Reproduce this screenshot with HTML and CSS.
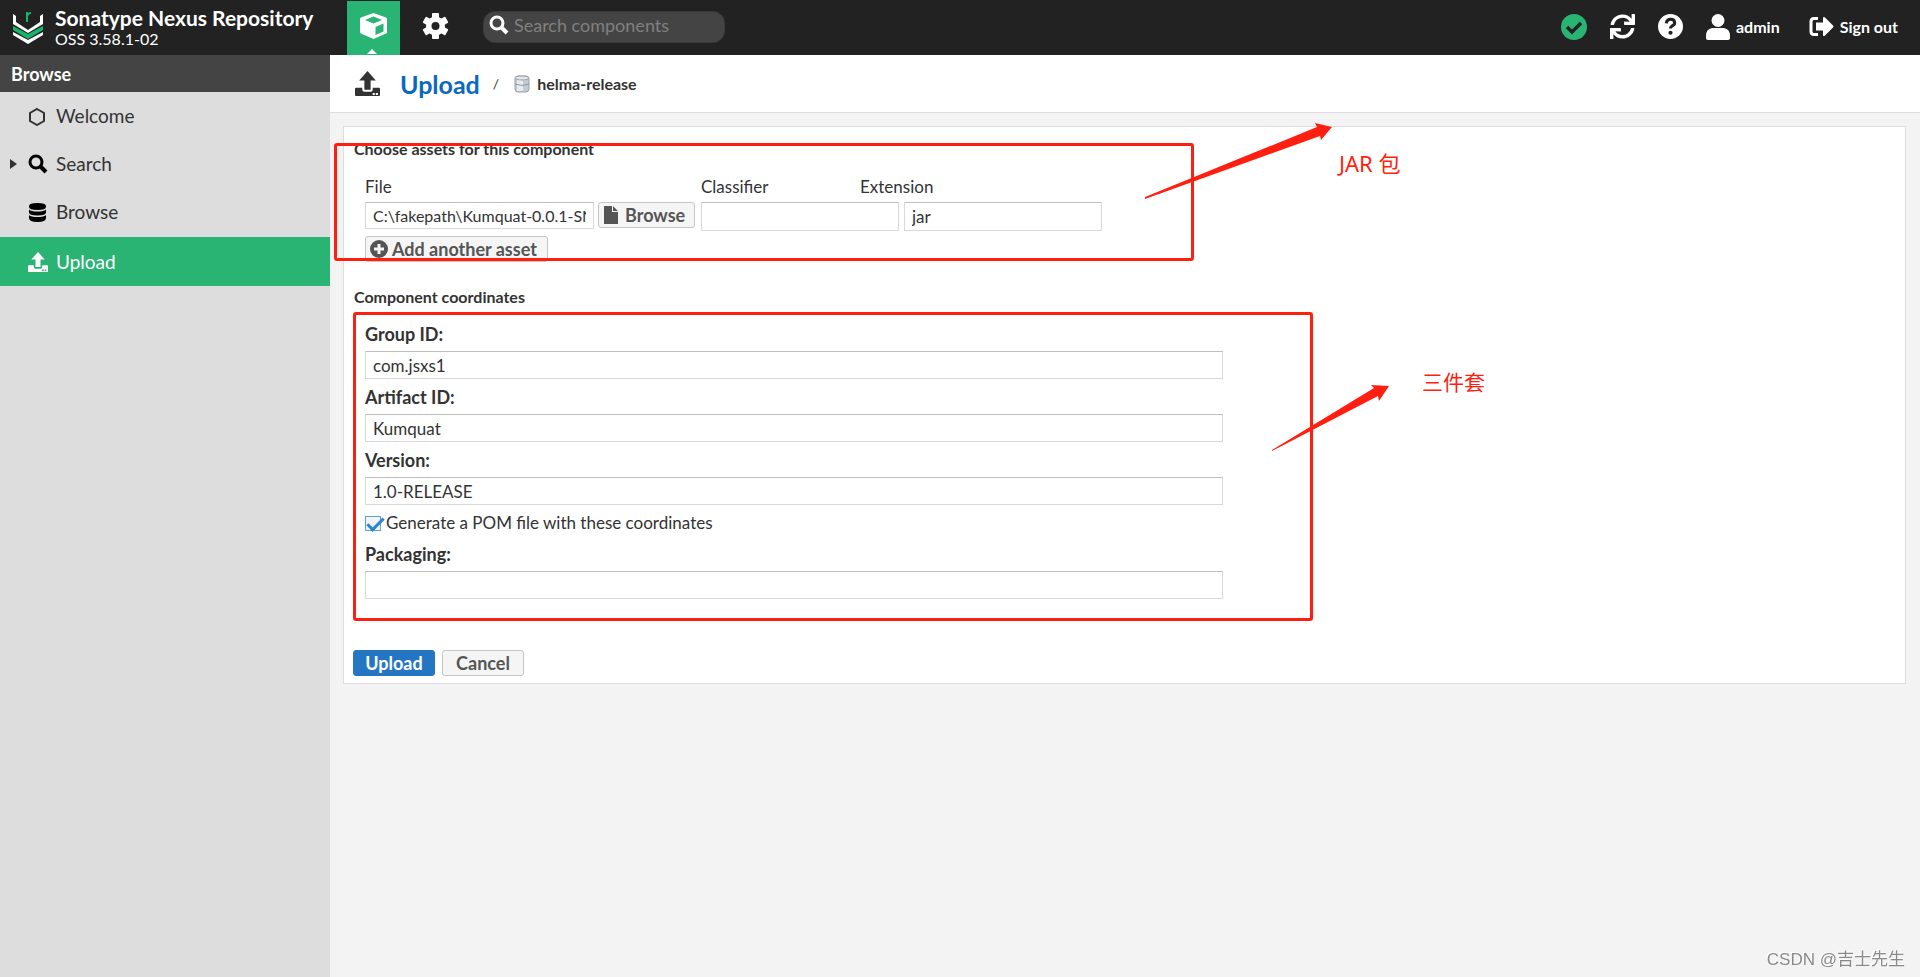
FILE: index.html
```html
<!DOCTYPE html>
<html lang="en">
<head>
<meta charset="utf-8">
<title>Upload - Nexus Repository Manager</title>
<link rel="stylesheet" href="styles.css">
</head>
<body>
<svg class="defs" aria-hidden="true">
  <symbol id="i-upload" viewBox="0 0 24 24"><path fill-rule="evenodd" d="M12 0l8 9h-5v9H9V9H4zM1 16h6v2q0 2 2 2h6q2 0 2-2v-2h6q1 0 1 1v6q0 1-1 1H1q-1 0-1-1v-6q0-1 1-1zM17 21v2h2v-2zM20 21v2h2v-2z"/></symbol>
  <symbol id="i-search" viewBox="0 0 20 20"><circle cx="8" cy="8" r="6" fill="none" stroke="currentColor" stroke-width="3"/><path d="M12 12l6 6" fill="none" stroke="currentColor" stroke-width="4"/></symbol>
</svg>
<div class="app">
  <header class="topbar">
    <div class="brand">
      <svg class="brand-logo" viewBox="0 0 30 32" aria-hidden="true">
        <path d="M0 2l3 2v6l12 8 12-8V4l3-2v10L15 21 0 12z" fill="#fff"/>
        <path d="M0 14l15 8 15-8v4l-15 9-15-9z" fill="#13b569"/>
        <path d="M0 20l15 8 15-8v3l-15 9-15-9z" fill="#fff"/>
        <path d="M14 10V0M14 4q1-3 4-3" fill="none" stroke="#13b569" stroke-width="2"/>
      </svg>
      <div class="brand-text">
        <div class="brand-name">Sonatype Nexus Repository</div>
        <div class="brand-version">OSS 3.58.1-02</div>
      </div>
    </div>
    <nav class="modes">
      <button class="mode mode-active" type="button" aria-label="Browse server contents">
        <svg class="icon-27" viewBox="0 0 27 26" aria-hidden="true"><path fill-rule="evenodd" fill="#fff" d="M13.500 0L26 4.500q1 .5 1 1.500v13q0 1-1 1.500L13.500 26 1 20.500Q0 20 0 19V6q0-1 1-1.500zM13.500 3.500L5 7l8.500 3.500L22 7zM15.500 14v8l8-3.500V10.500z"/></svg>
        <span class="mode-arrow"></span>
      </button>
      <button class="mode" type="button" aria-label="Administration">
        <svg class="icon-27" viewBox="0 0 26 26" aria-hidden="true"><g fill="#fff"><rect x="9.500" y="0" width="7" height="26" rx="1"/><rect x="9.500" y="0" width="7" height="26" rx="1" transform="rotate(60 13 13)"/><rect x="9.500" y="0" width="7" height="26" rx="1" transform="rotate(120 13 13)"/><circle cx="13" cy="13" r="9.500"/></g><circle cx="13" cy="13" r="4" fill="#222"/></svg>
      </button>
    </nav>
    <label class="quick-search">
      <svg class="icon-20" aria-hidden="true"><use href="#i-search"/></svg>
      <input type="search" placeholder="Search components" aria-label="Search components">
    </label>
    <div class="actions">
      <button type="button" aria-label="System status"><svg class="icon-26" viewBox="0 0 26 26" aria-hidden="true"><circle cx="13" cy="13" r="13" fill="#2ab474"/><path d="M6 13l5 5 9-9" fill="none" stroke="#222" stroke-width="3.500"/></svg></button>
      <button type="button" aria-label="Refresh"><svg class="icon-25" viewBox="0 0 512 512" aria-hidden="true"><path fill="#fff" d="M440.650 12.570l4 82.770A247.160 247.160 0 0 0 255.830 8C134.730 8 33.910 94.920 12.290 209.820A12 12 0 0 0 24.090 224h49.050a12 12 0 0 0 11.670-9.260 175.910 175.910 0 0 1 317-56.940l-101.460-4.860a12 12 0 0 0-12.570 12v47.410a12 12 0 0 0 12 12H500a12 12 0 0 0 12-12V12a12 12 0 0 0-12-12h-47.370a12 12 0 0 0-11.980 12.570zM255.830 432a175.610 175.610 0 0 1-146-77.800l101.800 4.870a12 12 0 0 0 12.570-12v-47.400a12 12 0 0 0-12-12H12a12 12 0 0 0-12 12V500a12 12 0 0 0 12 12h47.350a12 12 0 0 0 12-12.600l-4.150-82.570A247.170 247.170 0 0 0 255.830 504c121.110 0 221.930-86.920 243.550-201.820a12 12 0 0 0-11.800-14.180h-49.050a12 12 0 0 0-11.670 9.260A175.860 175.860 0 0 1 255.830 432z"/></svg></button>
      <button type="button" aria-label="Help"><svg class="icon-25" viewBox="0 0 24 24" aria-hidden="true"><circle cx="12" cy="12" r="12" fill="#fff"/><path d="M8 9q.5-4 4-4 4 0 4 3.500 0 2-2.500 3-1.500 1-1.500 2.500" fill="none" stroke="#222" stroke-width="3"/><circle cx="12" cy="18" r="2" fill="#222"/></svg></button>
      <button type="button"><svg class="icon-user" viewBox="0 0 24 26" aria-hidden="true"><circle cx="12" cy="6.500" r="6.500" fill="#fff"/><path d="M6 14h12q6 1 6 8v2q0 2-2 2H2q-2 0-2-2v-2q0-7 6-8z" fill="#fff"/></svg><span>admin</span></button>
      <button class="signout" type="button"><svg class="icon-25" viewBox="0 0 25 20" aria-hidden="true"><path d="M9 2H5Q2 2 2 5v10q0 3 3 3h4" fill="none" stroke="#fff" stroke-width="3"/><path d="M7 6h7V1q1-1 2 0l8 8q1 1 0 2l-8 8q-1 1-2 0v-5H7z" fill="#fff"/></svg><span>Sign out</span></button>
    </div>
  </header>
  <div class="body">
    <aside class="sidebar">
      <h2>Browse</h2>
      <nav class="menu">
        <a href="#welcome"><span class="twisty"></span><svg class="icon-20" viewBox="0 0 20 20" aria-hidden="true"><path d="M9 3l7 4v8l-7 4-7-4V7z" fill="none" stroke="#333" stroke-width="2"/></svg>Welcome</a>
        <a href="#search"><span class="twisty twisty-shown"></span><svg class="icon-20 black" aria-hidden="true"><use href="#i-search"/></svg>Search</a>
        <a href="#browse"><span class="twisty"></span><svg class="icon-20 black" viewBox="0 0 20 20" aria-hidden="true"><path d="M1 4q0-3 8.500-3T18 4v1q0 3-8.500 3T1 5zM1 7.500q2 2 8.500 2t8.500-2v3q0 3-8.500 3t-8.500-3zM1 13q2 2 8.500 2t8.500-2v3q0 4-8.500 4T1 16z"/></svg>Browse</a>
        <a href="#upload" class="current"><span class="twisty"></span><svg class="icon-20" aria-hidden="true"><use href="#i-upload"/></svg>Upload</a>
      </nav>
    </aside>
    <main class="content">
      <div class="crumbs">
        <svg class="icon-25" aria-hidden="true"><use href="#i-upload"/></svg>
        <a href="#upload">Upload</a>
        <span class="slash">/</span>
        <svg class="repo" viewBox="0 0 16 18" aria-hidden="true"><rect x="1" y="1" width="14" height="16" rx="3" fill="#c3cad2" stroke="#9aa3ad"/><rect x="3" y="2" width="6" height="14" fill="#e8ecf0"/><ellipse cx="8" cy="3" rx="7" ry="2" fill="#e3e7eb" stroke="#9aa3ad"/><path d="M1 9q7 3 14 0" fill="none" stroke="#8f99a4"/></svg>
        <span class="repo-name">helma-release</span>
      </div>
      <form class="panel">
        <section>
          <h3>Choose assets for this component</h3>
          <div class="asset-grid">
            <div class="asset-labels">
              <label for="file">File</label>
              <label for="classifier">Classifier</label>
              <label for="extension">Extension</label>
            </div>
            <div class="asset-row">
              <input id="file" class="field field-file" type="text" value="C:\fakepath\Kumquat-0.0.1-SNAPSHOT.jar">
              <button class="btn btn-browse" type="button"><svg class="doc" viewBox="0 0 14 18" aria-hidden="true"><path d="M0 0h8v6h6v12H0zM9 0l5 5H9z"/></svg>Browse</button>
              <input id="classifier" class="field field-short" type="text">
              <input id="extension" class="field field-short" type="text" value="jar">
            </div>
            <button class="btn btn-add" type="button"><svg class="plus" viewBox="0 0 18 18" aria-hidden="true"><circle cx="9" cy="9" r="9"/><path d="M9 4v10M4 9h10" stroke="#f5f5f5" stroke-width="3"/></svg>Add another asset</button>
          </div>
        </section>
        <section>
          <h3>Component coordinates</h3>
          <div class="coords">
            <label for="group">Group ID:</label>
            <input id="group" class="field" type="text" value="com.jsxs1">
            <label for="artifact">Artifact ID:</label>
            <input id="artifact" class="field" type="text" value="Kumquat">
            <label for="version">Version:</label>
            <input id="version" class="field" type="text" value="1.0-RELEASE">
            <label class="check"><input type="checkbox" checked>Generate a POM file with these coordinates</label>
            <label for="packaging">Packaging:</label>
            <input id="packaging" class="field" type="text">
          </div>
        </section>
        <div class="form-actions">
          <button class="btn btn-primary" type="button">Upload</button>
          <button class="btn btn-cancel" type="button">Cancel</button>
        </div>
      </form>
      <div class="mark mark-assets"></div>
      <div class="mark mark-coords"></div>
      <svg class="arrows" viewBox="0 0 1100 400" aria-hidden="true">
        <path d="M815 142L987 72l-2-4 17 4-11 13-1-4L815 144z"/>
        <path d="M942 395L1044 333l-3-3 18 1-10 15-1-5L942 396z"/>
      </svg>
      <span class="note note-jar">JAR 包</span>
      <span class="note note-three">三件套</span>
    </main>
  </div>
  <div class="watermark">CSDN @吉士先生</div>
</div>
</body>
</html>
```
FILE: styles.css
```css
* { box-sizing: border-box; }
body { margin: 0; font: 17px/20px Lato, "Noto Sans CJK SC", sans-serif; color: #333; }
button, input { font: inherit; color: inherit; margin: 0; }
button { border: 0; background: none; padding: 0; cursor: pointer; }
a { color: inherit; text-decoration: none; }
svg { display: block; flex: none; fill: currentColor; }
.defs { position: absolute; width: 0; height: 0; }
.app { display: flex; flex-direction: column; min-height: 100vh; }

.topbar { display: flex; height: 55px; background: #222; color: #fff; }
.brand { display: flex; width: 347px; padding: 6px 0 0 13px; gap: 12px; }
.brand-logo { width: 30px; height: 34px; margin-top: 5px; }
.brand-name { font-size: 21px; font-weight: 700; line-height: 24px; white-space: nowrap; }
.brand-version { font-size: 16px; line-height: 18px; }
.modes { display: flex; gap: 9px; padding-top: 1px; }
.mode { position: relative; display: flex; justify-content: center; width: 53px; padding-top: 12px; }
.mode-active { background: #2ab474; }
.mode-arrow { position: absolute; bottom: 1px; left: 20px; border: 5px solid transparent; border-top: 0; border-bottom-color: #fff; }
.icon-20 { width: 20px; height: 20px; }
.icon-25 { width: 25px; height: 25px; }
.icon-26 { width: 26px; height: 26px; }
.icon-27 { width: 27px; height: 26px; }
.icon-user { width: 24px; height: 26px; }
.quick-search { display: flex; align-items: center; gap: 5px; width: 242px; height: 32px; margin: 11px 0 0 21px; padding: 0 5px 4px; border: 1px solid #3a3a3a; border-radius: 12px; background: #444; }
.quick-search input { width: 100%; min-width: 0; border: 0; outline: 0; background: none; padding: 0; font-size: 18px; }
.quick-search input::placeholder { color: #808080; }
.actions { display: flex; align-items: center; gap: 23px; margin-left: auto; padding: 0 22px 2px 0; font-size: 16px; font-weight: 700; }
.actions button { display: flex; align-items: center; gap: 6px; }
.actions .signout { margin-left: 6px; }

.body { display: flex; flex: 1; }
.sidebar { width: 330px; flex: none; background: #ddd; }
.sidebar h2 { margin: 0; padding: 9px 11px 8px; background: #444; color: #fff; font-size: 18px; line-height: 20px; }
.menu a { display: flex; align-items: center; height: 48px; padding-left: 10px; font-size: 19px; }
.menu svg { margin-right: 8px; }
.menu .current { height: 49px; margin-top: 1px; background: #2ab474; color: #fff; }
.twisty { width: 18px; }
.twisty-shown::before { content: ""; display: block; width: 0; border: 5px solid transparent; border-left: 7px solid #333; border-right: 0; }
.black { color: #000; }

.content { position: relative; flex: 1; min-width: 0; background: #f3f3f3; }
.crumbs { display: flex; align-items: center; height: 58px; padding-left: 25px; border-bottom: 1px solid #ddd; background: #fff; }
.crumbs a { margin-left: 20px; color: #0a68c0; font-size: 25px; font-weight: 700; }
.slash { margin: 0 15px 0 13px; font-size: 14px; }
.repo { width: 16px; height: 18px; }
.repo-name { margin-left: 7px; font-size: 16px; font-weight: 700; }

.panel { margin: 13px 14px 0 13px; padding: 12px 9px 7px; border: 1px solid #ddd; background: #fff; }
h3 { margin: 0; padding-left: 1px; font-size: 16px; line-height: 20px; }
.asset-grid { padding: 18px 0 0 12px; }
.asset-labels { display: flex; }
.asset-labels label:nth-child(1) { width: 336px; }
.asset-labels label:nth-child(2) { width: 159px; }
.asset-row { display: flex; align-items: flex-start; margin: 5px 0 5px; }
.field { display: block; width: 100%; height: 28px; padding: 0 7px; border: 1px solid #d9d9d9; border-top-color: #c0c0c0; background: #fff; outline: 0; }
.field-file { width: 229px; height: 27px; margin-right: 4px; font-size: 16px; }
.field-short { width: 198px; height: 29px; margin-right: 5px; }
.btn { display: flex; align-items: center; height: 26px; border: 1px solid #c5c5c5; border-radius: 3px; background: #f5f5f5; color: #555; font-size: 18px; font-weight: 700; }
.btn-browse { width: 97px; margin-right: 6px; padding-left: 5px; gap: 7px; }
.doc { width: 14px; height: 18px; }
.plus { width: 18px; height: 18px; }
.btn-add { width: 183px; padding-left: 4px; gap: 4px; }
section + section { margin-top: 25px; }
.coords { display: flex; flex-direction: column; max-width: 870px; padding: 17px 0 0 12px; }
.coords label { margin-bottom: 7px; font-size: 18px; font-weight: 700; }
.coords .field { margin-bottom: 8px; }
.coords .check { display: flex; align-items: center; gap: 5px; margin: 0 0 11px; font-size: 17px; font-weight: 400; }
.check input { appearance: none; width: 16px; height: 15px; border: 1px solid #5ba3da; background: #f1f4f7; }
.check input:checked::after { content: ""; display: block; width: 14px; height: 6px; border: solid #2a86d0; border-width: 0 0 3px 3px; transform: translate(1px, 1px) rotate(-45deg); }
.form-actions { display: flex; gap: 7px; margin-top: 43px; }
.form-actions .btn { justify-content: center; width: 82px; }
.form-actions .btn-primary { border-color: #2476c3; background: #2476c3; color: #fff; }

.mark { position: absolute; border: 3px solid #ff1f10; border-radius: 3px; }
.mark-assets { left: 4px; top: 88px; width: 860px; height: 118px; }
.mark-coords { left: 23px; top: 257px; width: 960px; height: 309px; }
.arrows { position: absolute; left: 0; top: 0; width: 1100px; height: 400px; fill: #ff1f10; pointer-events: none; }
.note { position: absolute; color: #ff1f10; font: 21px/24px "Noto Sans", "Noto Sans CJK SC", sans-serif; }
.note-jar { left: 1009px; top: 96px; font-size: 22px; }
.note-three { left: 1092px; top: 315px; }
.watermark { position: fixed; right: 15px; bottom: 7px; color: #8a8a8a; font: 17px/20px "Liberation Sans", "Noto Sans CJK SC", sans-serif; text-shadow: -1px -1px 0 #fff; }
```
